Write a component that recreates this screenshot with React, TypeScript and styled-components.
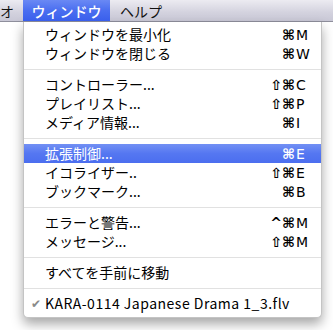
import styled, { createGlobalStyle } from "styled-components";

const GlobalStyle = createGlobalStyle`
  html, body {
    margin: 0;
    padding: 0;
    background: #ffffff;
  }
  body {
    font-family: "Noto Sans CJK JP", "DejaVu Sans", sans-serif;
    overflow: hidden;
  }
`;

interface IItem {
  label: string;
  mods?: string;
  key?: string;
  checked?: boolean;
  active?: boolean;
}

const groups: IItem[][] = [
  [
    { label: "ウィンドウを最小化", mods: "⌘", key: "M" },
    { label: "ウィンドウを閉じる", mods: "⌘", key: "W" },
  ],
  [
    { label: "コントローラー...", mods: "⇧⌘", key: "C" },
    { label: "プレイリスト...", mods: "⇧⌘", key: "P" },
    { label: "メディア情報...", mods: "⌘", key: "I" },
  ],
  [
    { label: "拡張制御...", mods: "⌘", key: "E", active: true },
    { label: "イコライザー..", mods: "⇧⌘", key: "E" },
    { label: "ブックマーク...", mods: "⌘", key: "B" },
  ],
  [
    { label: "エラーと警告...", mods: "^⌘", key: "M" },
    { label: "メッセージ...", mods: "⇧⌘", key: "M" },
  ],
  [{ label: "すべてを手前に移動" }],
  [{ label: "KARA-0114 Japanese Drama 1_3.flv", checked: true }],
];

export default function App() {
  return (
    <>
      <GlobalStyle />
      <Screen>
        <MenuBar>
          <BarItem $first>オ</BarItem>
          <BarItem $open>ウィンドウ</BarItem>
          <BarItem>ヘルプ</BarItem>
        </MenuBar>
        <Dropdown>
          {groups.map((group, gi) => (
            <Group key={gi}>
              {gi > 0 && <Separator />}
              {group.map((item, i) => (
                <Row key={i} $active={item.active}>
                  <Check>{item.checked ? "✔" : ""}</Check>
                  <Label $latin={item.checked}>{item.label}</Label>
                  <Mods>{item.mods}</Mods>
                  <Key>{item.key}</Key>
                </Row>
              ))}
            </Group>
          ))}
        </Dropdown>
      </Screen>
    </>
  );
}

const Screen = styled.div`
  width: 333px;
  height: 330px;
  overflow: hidden;
`;

const MenuBar = styled.div`
  display: flex;
  flex-direction: row;
  height: 21px;
  border-bottom: 1px solid #8f8f9c;
  background: linear-gradient(#ecebf1, #d3d2de 60%, #c9c8d6);
`;

const BarItem = styled.div<{ $first?: boolean; $open?: boolean }>`
  display: flex;
  align-items: center;
  justify-content: ${(p) => (p.$open ? "center" : "flex-start")};
  height: 21px;
  width: ${(p) => (p.$first ? "23px" : p.$open ? "87px" : "auto")};
  padding: ${(p) => (p.$first || p.$open ? "0" : "0 10px")};
  font-size: 14px;
  font-weight: ${(p) => (p.$open ? 500 : 400)};
  color: ${(p) => (p.$open ? "#ffffff" : "#111111")};
  background: ${(p) =>
    p.$open ? "linear-gradient(#6a89f4, #4a6ef0 50%, #3a5fec)" : "none"};
  box-sizing: border-box;
`;

const Dropdown = styled.div`
  margin-left: 23px;
  width: 299px;
  padding: 3px 0 4px;
  box-sizing: border-box;
  background: #ffffff;
  border: 1px solid #c4c4c4;
  border-top: none;
  border-radius: 0 0 5px 5px;
  box-shadow: 0 6px 12px rgba(0, 0, 0, 0.35);
`;

const Group = styled.div`
  display: flex;
  flex-direction: column;
`;

const Separator = styled.div`
  height: 1px;
  margin: 6px 0 5px;
  background: #e1e1e1;
`;

const Row = styled.div<{ $active?: boolean }>`
  display: grid;
  grid-template-columns: 21px 1fr auto 25px;
  align-items: center;
  height: 19px;
  font-size: 14px;
  color: ${(p) => (p.$active ? "#ffffff" : "#000000")};
  background: ${(p) =>
    p.$active ? "linear-gradient(#7290f4, #5577f1 50%, #4b6eef)" : "none"};
`;

const Check = styled.span`
  text-align: right;
  padding-right: 4px;
  color: #8a8a8a;
  font-family: "DejaVu Sans", sans-serif;
  font-size: 12px;
`;

const Label = styled.span<{ $latin?: boolean }>`
  white-space: nowrap;
  line-height: 19px;
  letter-spacing: ${(p) => (p.$latin ? "0.5px" : "0")};
`;

const Mods = styled.span`
  font-family: "DejaVu Sans", sans-serif;
  font-weight: 600;
  text-align: right;
  padding-right: 1px;
`;

const Key = styled.span`
  font-family: "DejaVu Sans", sans-serif;
`;
